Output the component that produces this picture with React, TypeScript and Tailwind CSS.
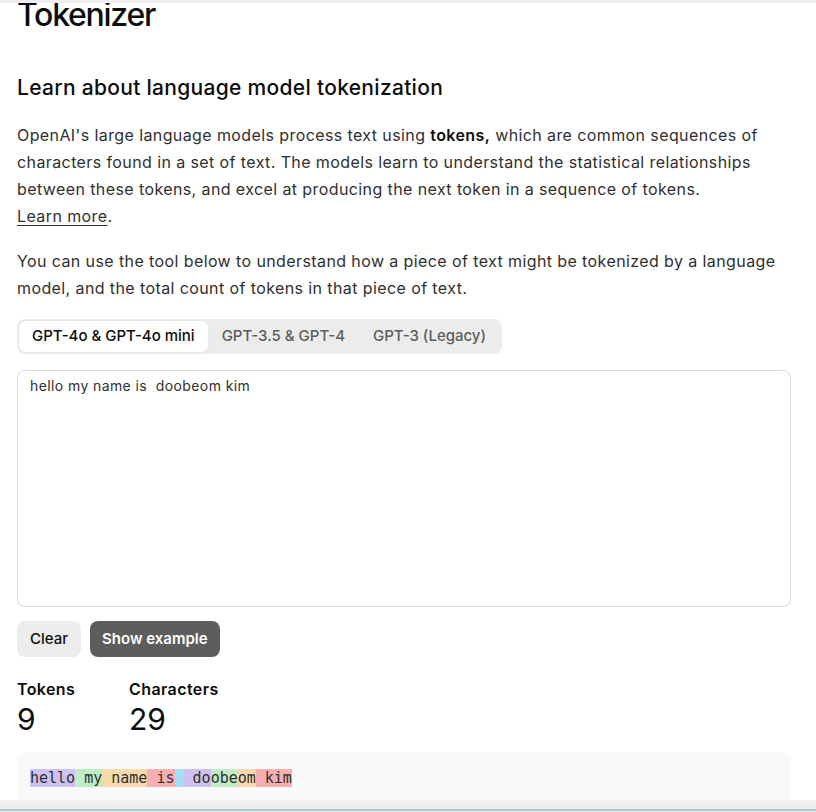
import React from 'react';

const tokens = [
  { text: 'hello', color: 'bg-[rgba(107,64,216,0.3)]' },
  { text: ' my', color: 'bg-[rgba(104,222,122,0.4)]' },
  { text: ' name', color: 'bg-[rgba(244,172,54,0.4)]' },
  { text: ' is', color: 'bg-[rgba(239,65,70,0.4)]' },
  { text: ' ', color: 'bg-[rgba(39,181,234,0.4)]' },
  { text: ' do', color: 'bg-[rgba(107,64,216,0.3)]' },
  { text: 'obe', color: 'bg-[rgba(104,222,122,0.4)]' },
  { text: 'om', color: 'bg-[rgba(244,172,54,0.4)]' },
  { text: ' kim', color: 'bg-[rgba(239,65,70,0.4)]' },
];

const tabs = ['GPT-4o & GPT-4o mini', 'GPT-3.5 & GPT-4', 'GPT-3 (Legacy)'];

export default function App() {
  const [active, setActive] = React.useState(0);
  const [text, setText] = React.useState('hello my name is  doobeom kim');

  return (
    <div
      className="h-[812px] w-full overflow-hidden flex flex-col bg-white text-[#2f2f2f]"
      style={{ fontFamily: 'Inter, "Noto Sans", sans-serif' }}
    >
      <div className="h-[3px] bg-[#efefef] shrink-0" />

      <main className="flex-1 overflow-hidden">
        <div className="ml-[17px] w-[774px]">
          <h1 className="-mt-[8px] text-[32px] leading-[40px] font-medium tracking-[-0.04em] text-[#0d0d0d]">
            Tokenizer
          </h1>

          <h2 className="mt-[39px] text-[21px] leading-[28px] font-medium tracking-[0.3px] text-[#0d0d0d]">
            Learn about language model tokenization
          </h2>

          <p className="mt-[20px] text-[16px] leading-[27px] tracking-[0.4px]">
            OpenAI's large language models process text using <strong className="font-semibold text-[#0d0d0d]">tokens,</strong> which are common sequences of characters found in a set of text. The models learn to understand the statistical relationships between these tokens, and excel at producing the next token in a sequence of tokens.
            <br />
            <a href="#" className="underline underline-offset-[3px]">Learn more</a>.
          </p>

          <p className="mt-[18px] text-[16px] leading-[27px] tracking-[0.4px]">
            You can use the tool below to understand how a piece of text might be tokenized by a language model, and the total count of tokens in that piece of text.
          </p>

          <div className="mt-[17px] inline-flex p-[2px] rounded-[8px] bg-[#ececec]">
            {tabs.map((t, i) => (
              <button
                key={t}
                onClick={() => setActive(i)}
                className={
                  i === active
                    ? 'h-[31px] px-[13px] rounded-[6px] bg-white text-[15px] font-medium text-[#0d0d0d] shadow-[0_0_1px_rgba(0,0,0,0.15)]'
                    : 'h-[31px] px-[14px] rounded-[6px] text-[15px] font-medium text-[#5d5d5d]'
                }
              >
                {t}
              </button>
            ))}
          </div>

          <textarea
            value={text}
            onChange={(e) => setText(e.target.value)}
            className="mt-[16px] block w-[774px] h-[237px] resize-none rounded-[8px] border border-[#d9d9d9] px-[12px] pt-[5px] text-[14px] leading-[20px] tracking-[0.4px] text-[#2f2f2f] outline-none"
            style={{ fontFamily: 'Inter, "Noto Sans", sans-serif' }}
          />

          <div className="mt-[14px] flex gap-[9px]">
            <button className="h-[36px] px-[13px] rounded-[8px] bg-[#ececec] text-[15px] font-medium text-[#0d0d0d]">
              Clear
            </button>
            <button className="h-[36px] px-[12px] rounded-[8px] bg-[#5d5d5d] text-[15px] font-semibold text-white">
              Show example
            </button>
          </div>

          <div className="mt-[20px] flex">
            <div className="w-[112px]">
              <div className="text-[16px] leading-[24px] font-semibold tracking-[0.4px] text-[#0d0d0d]">Tokens</div>
              <div className="text-[30px] leading-[36px] text-[#0d0d0d]">9</div>
            </div>
            <div>
              <div className="text-[16px] leading-[24px] font-semibold tracking-[0.4px] text-[#0d0d0d]">Characters</div>
              <div className="text-[30px] leading-[36px] text-[#0d0d0d]">29</div>
            </div>
          </div>

          <div className="mt-[15px] rounded-[8px] bg-[#f9f9f9] px-[13px] pt-[16px] pb-[16px] min-h-[80px]">
            <div
              className="text-[15px] leading-[20px] text-[#2f2f2f] whitespace-pre"
              style={{ fontFamily: '"DejaVu Sans Mono", "Liberation Mono", monospace' }}
            >
              {tokens.map((tk, i) => (
                <span key={i} className={tk.color}>
                  {tk.text}
                </span>
              ))}
            </div>
          </div>
        </div>
      </main>

      <div className="shrink-0 h-[9px] bg-gradient-to-b from-[#f4f4f4] to-[#ebebeb]" />
      <div className="shrink-0 h-[2px] bg-[#a9c8cb]" />
      <div className="shrink-0 h-[1px] bg-[#e9e9e9]" />
    </div>
  );
}
